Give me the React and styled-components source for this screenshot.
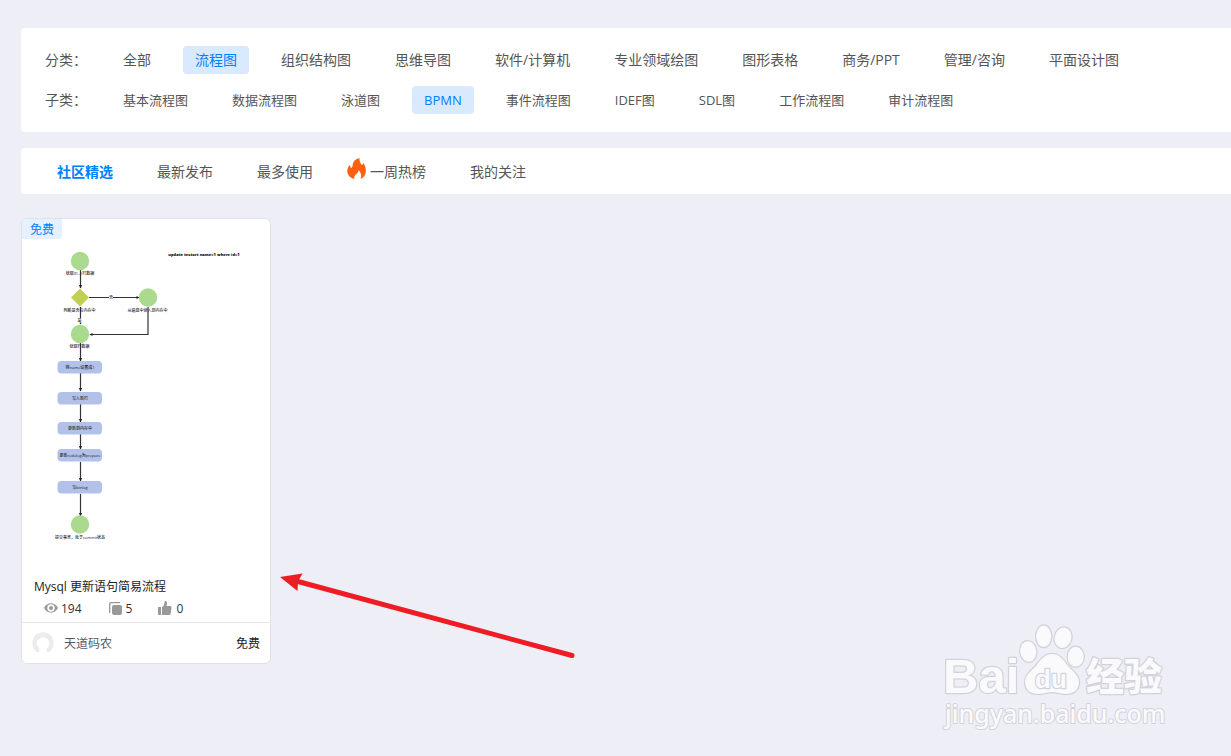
import React from "react";
import styled, { createGlobalStyle, css } from "styled-components";

const Global = createGlobalStyle`
  * { box-sizing: border-box; }
  body {
    margin: 0;
    background: #eeeef7;
    color: #555;
    font-family: "Open Sans", "Noto Sans CJK SC", sans-serif;
    font-size: 14px;
    font-weight: 390;
  }
  button { font-family: inherit; font-weight: inherit; cursor: pointer; }
`;

const Page = styled.main`
  position: relative;
  min-height: 100vh;
  padding: 28px 0 0 21px;
  overflow: hidden;
`;

const Panel = styled.section`
  display: flex;
  flex-direction: column;
  gap: 12px;
  padding: 18px 24px;
  background: #fff;
  border-radius: 4px 0 0 4px;
`;

const FilterRow = styled.div`
  display: flex;
  align-items: center;
`;

const FilterLabel = styled.span`
  flex: 0 0 66px;
  line-height: 28px;
`;

const Options = styled.div`
  display: flex;
  gap: 20px;
`;

const Option = styled.button`
  height: 28px;
  padding: 0 12px;
  border: 0;
  border-radius: 4px;
  background: ${(p) => (p.$active ? "#d9eaff" : "transparent")};
  color: ${(p) => (p.$active ? "#0080ff" : "#555")};
  font-size: ${(p) => (p.$small ? 13 : 14)}px;
  line-height: 28px;
  white-space: nowrap;
`;

const TabBar = styled.nav`
  display: flex;
  align-items: center;
  gap: 20px;
  height: 46px;
  margin-top: 16px;
  padding: 0 24px;
  background: #fff;
  border-radius: 4px 0 0 4px;
`;

const Tab = styled.button`
  display: flex;
  align-items: center;
  height: 30px;
  padding: 2px 12px 0;
  border: 0;
  background: none;
  color: #555;
  font-size: 14px;
  line-height: 28px;
  white-space: nowrap;
  ${(p) => p.$active && css`
    color: #0080ff;
    font-weight: 700;
  `}
  ${(p) => p.$withIcon && css`
    padding-left: 0;
  `}
`;

const FlameIcon = styled.svg`
  width: 25px;
  height: 28px;
`;

const Cards = styled.div`
  display: flex;
  flex-wrap: wrap;
  gap: 20px;
  margin-top: 24px;
`;

const Card = styled.article`
  position: relative;
  width: 250px;
  border: 1px solid #e2e2e6;
  border-radius: 6px;
  background: #fff;
  overflow: hidden;
  font-size: 12px;
`;

const Badge = styled.span`
  position: absolute;
  top: 0;
  left: 0;
  height: 20px;
  padding: 0 8px;
  border-radius: 0 0 4px 0;
  background: #e5f1ff;
  color: #0080ff;
  line-height: 22px;
`;

const Preview = styled.svg`
  display: block;
  width: 100%;
  height: 356px;
`;

const CardTitle = styled.a`
  display: block;
  padding: 0 12px;
  color: #222;
  line-height: 24px;
  text-decoration: none;
`;

const Stats = styled.div`
  display: flex;
  gap: 25px;
  padding: 0 20px 3px;
`;

const Stat = styled.span`
  display: flex;
  align-items: center;
  gap: 3px;
  color: #333;
  line-height: 20px;

  svg {
    width: 16px;
    height: 16px;
    fill: #999;
  }
`;

const CardFooter = styled.footer`
  display: flex;
  align-items: center;
  height: 41px;
  padding: 0 10px;
  border-top: 1px solid #e6e6e6;
`;

const Avatar = styled.svg`
  width: 22px;
  height: 22px;
  margin-right: 10px;
`;

const Author = styled.a`
  color: #515a6e;
  text-decoration: none;
`;

const Price = styled.span`
  margin-left: auto;
  color: #222;
`;

const Pointer = styled.svg`
  position: absolute;
  top: 560px;
  left: 270px;
  width: 320px;
  height: 110px;
  pointer-events: none;
`;

const Watermark = styled.svg`
  position: absolute;
  right: 51px;
  bottom: 16px;
  width: 250px;
  height: 125px;
  pointer-events: none;
`;

const categories = ["全部", "流程图", "组织结构图", "思维导图", "软件/计算机", "专业领域绘图", "图形表格", "商务/PPT", "管理/咨询", "平面设计图"];
const subcategories = ["基本流程图", "数据流程图", "泳道图", "BPMN", "事件流程图", "IDEF图", "SDL图", "工作流程图", "审计流程图"];

const steps = [
  { y: 142, text: "将name设置成1" },
  { y: 173, text: "写入新行" },
  { y: 203, text: "更新到内存中" },
  { y: 230, text: "更新redolog为prepare" },
  { y: 262, text: "写binlog" },
];

const downArrows = [
  [51, 69], [88, 105], [124, 142], [154, 172], [185, 203], [215, 230], [243, 262], [275, 297],
];

function FlowPreview() {
  return (
    <Preview viewBox="0 0 248 356" role="img" aria-label="Mysql 更新语句简易流程">
      <g stroke="#333" strokeWidth="1.2" fill="none">
        {downArrows.map(([a, b]) => <path key={a} d={`M58.5 ${a}V${b}`} />)}
        <path d="M67 78.5H117M126 88V115.5H68" />
      </g>
      <g fill="#222">
        {downArrows.map(([a, b]) => <path key={a} d={`M56.9 ${b - 3}h3.2l-1.6 3.4z`} />)}
        <path d="M114.500 77v3l3-1.500zM70.500 114v3l-3-1.500z" />
      </g>
      <g fill="#a9da8e">
        <circle cx="58" cy="42" r="9.200" />
        <circle cx="126" cy="78.500" r="9.200" />
        <circle cx="58" cy="115" r="9.200" />
        <circle cx="58" cy="305.500" r="9.200" />
      </g>
      <path d="M58 69.500l9 9-9 9-9-9z" fill="#c0d052" />
      {steps.map((s) => (
        <rect key={s.y} x="35.500" y={s.y} width="44.500" height="12.500" rx="4" fill="#b1c1ea" />
      ))}
      <g fill="#fff">
        <rect x="87" y="76.500" width="4" height="4" />
        <rect x="55" y="99" width="5" height="4.500" />
      </g>
      <g fontSize="4" fontWeight="500" fill="#222" textAnchor="middle">
        {steps.map((s) => <text key={s.y} x="58" y={s.y + 8}>{s.text}</text>)}
        <text x="58" y="56">获取ID=1行数据</text>
        <text x="57.500" y="92.500">判断是否在内存中</text>
        <text x="125.500" y="92.500">从磁盘中读入到内存中</text>
        <text x="89" y="80">否</text>
        <text x="57.500" y="103">是</text>
        <text x="57.500" y="129">获取行数据</text>
        <text x="58" y="319.500">提交事务，处于commit状态</text>
        <text x="182" y="36.500" fontFamily='"Noto Sans", sans-serif' fontWeight="900" fill="#111">update testset name=1 where id=1</text>
      </g>
    </Preview>
  );
}

function BaiduMark() {
  return (
    <Watermark viewBox="0 0 250 125" role="img" aria-label="Baidu 经验">
      <g fill="#fafafd" stroke="#d2d2da" strokeWidth="2.500" strokeLinejoin="round" paintOrder="stroke">
        <ellipse cx="98.300" cy="36.500" rx="8" ry="10.300" transform="rotate(-8 98.300 36.500)" />
        <ellipse cx="113.700" cy="21.300" rx="7.500" ry="10.800" />
        <ellipse cx="133" cy="22.700" rx="8.300" ry="10.300" transform="rotate(14 133 22.700)" />
        <ellipse cx="145.700" cy="41.700" rx="8" ry="10" />
        <path d="M122 39C114 39 110 46 105 52C99 58 95 61 95 67C95 75 101 79 108 79C113 79 117 77 122 77C127 77 131 79 136 79C143 79 149 75 149 67C149 60 143 57 138 51C133 45 130 39 122 39Z" />
        <text x="13" y="78" fontFamily='"Liberation Sans", sans-serif' fontWeight="700" fontSize="49">Bai</text>
        <text x="105" y="73" fontFamily='"Liberation Sans", sans-serif' fontWeight="700" fontSize="26">du</text>
        <text x="156" y="75" fontFamily='"Noto Sans CJK SC", sans-serif' fontWeight="900" fontSize="38">经验</text>
        <text x="15" y="108" fontFamily='"Noto Sans", sans-serif' fontWeight="500" fontSize="25" strokeWidth="2">jingyan.baidu.com</text>
      </g>
    </Watermark>
  );
}

export default function App() {
  return (
    <>
      <Global />
      <Page>
        <Panel>
          <FilterRow role="group" aria-labelledby="category-label">
            <FilterLabel id="category-label">分类：</FilterLabel>
            <Options>
              {categories.map((c) => <Option key={c} type="button" $active={c === "流程图"}>{c}</Option>)}
            </Options>
          </FilterRow>
          <FilterRow role="group" aria-labelledby="subcategory-label">
            <FilterLabel id="subcategory-label">子类：</FilterLabel>
            <Options>
              {subcategories.map((c) => <Option key={c} type="button" $small $active={c === "BPMN"}>{c}</Option>)}
            </Options>
          </FilterRow>
        </Panel>

        <TabBar>
          <Tab type="button" $active>社区精选</Tab>
          <Tab type="button">最新发布</Tab>
          <Tab type="button">最多使用</Tab>
          <Tab type="button" $withIcon>
            <FlameIcon viewBox="0 1 25 28" aria-hidden="true">
              <path
                fill="#ff6010"
                d="M14.500 0C14 2.500 15.500 4.500 16.500 7C17.300 7 17.800 6 18.300 5C20.300 7.500 21 10 20.800 13.500C20.600 17 18.500 20 15.500 21C17 18 16 14.500 13.500 12C13.500 14.500 12.500 15 11.300 16C9.300 17.600 8.800 19.200 9.600 21C5.500 20 2.500 17.500 2.300 13.500C2.100 10.700 3.500 9 4.300 7C5.300 8 5.700 9 5.700 10C7 10 7.600 8.500 7.700 7C8 3.500 10.500 1 14.500 0Z"
                transform="translate(0 1)"
              />
            </FlameIcon>
            一周热榜
          </Tab>
          <Tab type="button">我的关注</Tab>
        </TabBar>

        <Cards>
          <Card>
            <FlowPreview />
            <Badge>免费</Badge>
            <CardTitle href="#">Mysql 更新语句简易流程</CardTitle>
            <Stats>
              <Stat>
                <svg viewBox="0 0 16 16" aria-hidden="true">
                  <path fillRule="evenodd" d="M2 7C5 .8 13 .8 16 7C13 13.200 5 13.200 2 7ZM9 3.300a3.700 3.700 0 1 0 0 7.400a3.700 3.700 0 1 0 0-7.400ZM9 5a2 2 0 1 1 0 4a2 2 0 1 1 0-4Z" />
                </svg>
                194
              </Stat>
              <Stat>
                <svg viewBox="0 0 16 16" aria-hidden="true">
                  <path d="M2 12V3Q2 1 4 1H13V2.300H4.300Q3.300 2.300 3.300 3.300V12Z" />
                  <rect x="5" y="4" width="10" height="10" rx="2" />
                </svg>
                5
              </Stat>
              <Stat>
                <svg viewBox="0 0 16 16" aria-hidden="true">
                  <path d="M1 6H4V14H2Q1 14 1 13ZM5 6C7.500 5 7.300 3 7.500 .8Q8.200-.6 9.500 .5C10.500 1.500 10 3.500 9.500 5H13Q14.700 5 14.500 6.700L13.700 12.500Q13.400 14 12 14H5Z" />
                </svg>
                0
              </Stat>
            </Stats>
            <CardFooter>
              <Avatar viewBox="0 0 22 22" aria-hidden="true">
                <path fill="#ececec" d="M4.500 20C-2 15 0 5 5 2Q11-1.500 17 2C22 5 24 15 17.500 20Q16 20.500 14.500 19.500V17C20 12 17 5.500 11 5.500C5 5.500 2 12 7.500 17V19.500Q6 20.500 4.500 20Z" />
              </Avatar>
              <Author href="#">天道码农</Author>
              <Price>免费</Price>
            </CardFooter>
          </Card>
        </Cards>

        <Pointer viewBox="0 0 320 110" aria-hidden="true">
          <path d="M28 21.500L302 95.500" stroke="#ee1c25" strokeWidth="5" strokeLinecap="round" />
          <path d="M10 17L32.500 13.500L28 21.500L27.500 31Z" fill="#ee1c25" />
        </Pointer>
        <BaiduMark />
      </Page>
    </>
  );
}
